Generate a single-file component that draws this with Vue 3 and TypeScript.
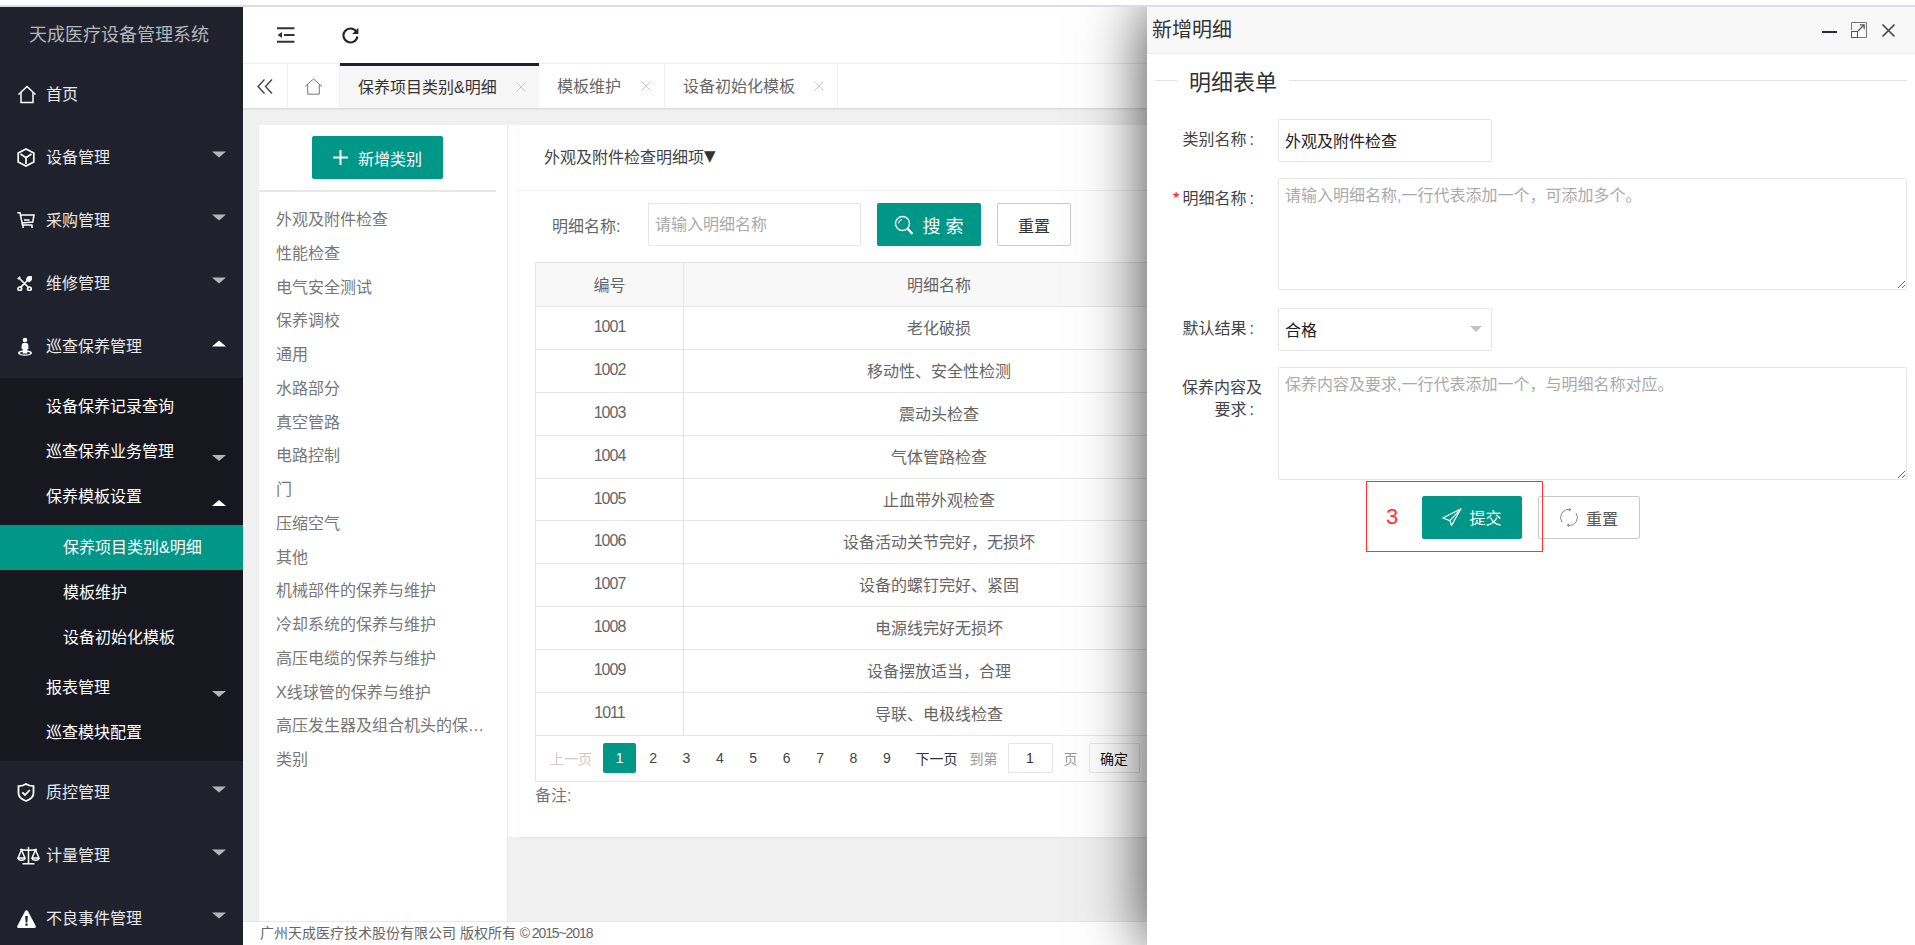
<script setup lang="ts">
interface Glyph { stroke?: string; fill?: string; solid?: string; w: number; h: number; vb: string; sw?: number }
interface SubItem { label: string; caret?: 'up' | 'down'; active?: boolean }

const glyphs: Record<string, Glyph> = {
  home: { w: 20, h: 19, vb: '0 0 20 19', stroke: 'M1.5 9.5 L10 1.5 L18.5 9.5 M4 7.5 V17.5 H16 V7.5' },
  cube: { w: 18, h: 19, vb: '0 0 18 19', sw: 1.7, stroke: 'M9 1 L16.8 5 V14 L9 18 L1.2 14 V5 Z M3.5 6 L9 9.8 L14.5 6 M9 9.8 V16' },
  cart: { w: 18, h: 17, vb: '0 0 18 17', stroke: 'M0.3 0.8 H3 L5.5 13 H15.5 M3.4 3 H17 L15.8 10 L5 11 M7 8 H12.5 M6 13 V16 M15 13 V16' },
  tools: { w: 15, h: 15, vb: '0 0 15 15', sw: 1.7, stroke: 'M2.5 2.5 L11.5 11.5 M11.5 3.5 L3.8 11.2 M0.8 3.2 L3.2 0.8 M9.8 4.2 A3.2 3.2 0 0 1 13.5 0.8 L11.8 2.8 L12.4 3.6 L14.2 2 A3.2 3.2 0 0 1 11.2 5.4 M1 12.8 A1.8 1.8 0 1 0 4.6 12.8 A1.8 1.8 0 1 0 1 12.8 Z M10.6 12.8 A1.8 1.8 0 1 0 14.2 12.8 A1.8 1.8 0 1 0 10.6 12.8 Z' },
  person: { w: 16, h: 19, vb: '0 0 16 19', fill: 'M1 16 A7 2.7 0 1 0 15 16 A7 2.7 0 1 0 1 16 Z M3 16 A5 1.6 0 1 0 13 16 A5 1.6 0 1 0 3 16 Z', solid: 'M8 0.8 A2.3 2.3 0 1 1 8 5.4 A2.3 2.3 0 1 1 8 0.8 Z M5.8 6 H10.2 L11.4 8 V12 H10.4 V16.6 H5.6 V12 H4.6 V8 Z' },
  shield: { w: 18, h: 19, vb: '0 0 18 19', sw: 1.8, stroke: 'M9 1 C11 2.4 13.5 3 16.5 3.2 V10 C16.5 14 13 16.6 9 18 C5 16.6 1.5 14 1.5 10 V3.2 C4.5 3 7 2.4 9 1 Z M5.3 9.3 L8 12 L12.8 7' },
  scale: { w: 23, h: 19, vb: '0 0 23 19', stroke: 'M11.5 1 V17.5 M5.5 17.8 H17.5 M3 3.6 C7 4.6 16 4.6 20 3.6 M4.5 4 L1 12 H8 Z M18.5 4 L15 12 H22 Z M1 12 C1.5 15 7.5 15 8 12 M15 12 C15.5 15 21.5 15 22 12' },
  warn: { w: 19, h: 18, vb: '0 0 19 18', fill: 'M9.5 0.3 C10.2 0.3 10.6 0.7 11 1.3 L18.6 15.8 C19.2 17 18.5 18 17.4 18 H1.6 C0.5 18 -0.2 17 0.4 15.8 L8 1.3 C8.4 0.7 8.8 0.3 9.5 0.3 Z M8.2 6 L8.6 12.4 H10.4 L10.8 6 Z M8.4 13.6 V15.8 H10.6 V13.6 Z' },
}

const topBefore = [
  { label: '首页', icon: 'home' },
  { label: '设备管理', icon: 'cube', caret: 'down' },
  { label: '采购管理', icon: 'cart', caret: 'down' },
  { label: '维修管理', icon: 'tools', caret: 'down' },
  { label: '巡查保养管理', icon: 'person', caret: 'up' },
]
const subTop: SubItem[] = [
  { label: '设备保养记录查询' },
  { label: '巡查保养业务管理', caret: 'down' },
  { label: '保养模板设置', caret: 'up' },
]
const subDeep: SubItem[] = [
  { label: '保养项目类别&明细', active: true },
  { label: '模板维护' },
  { label: '设备初始化模板' },
]
const subBottom: SubItem[] = [
  { label: '报表管理', caret: 'down' },
  { label: '巡查模块配置' },
]
const topAfter = [
  { label: '质控管理', icon: 'shield', caret: 'down' },
  { label: '计量管理', icon: 'scale', caret: 'down' },
  { label: '不良事件管理', icon: 'warn', caret: 'down' },
]
const tabs = [
  { label: '保养项目类别&明细', active: true, w: 199 },
  { label: '模板维护', w: 126 },
  { label: '设备初始化模板', w: 173 },
]
const categories = [
  '外观及附件检查', '性能检查', '电气安全测试', '保养调校', '通用', '水路部分', '真空管路', '电路控制', '门',
  '压缩空气', '其他', '机械部件的保养与维护', '冷却系统的保养与维护', '高压电缆的保养与维护', 'X线球管的保养与维护',
  '高压发生器及组合机头的保养与维护', '类别',
]
const rows: [string, string][] = [
  ['1001', '老化破损'],
  ['1002', '移动性、安全性检测'],
  ['1003', '震动头检查'],
  ['1004', '气体管路检查'],
  ['1005', '止血带外观检查'],
  ['1006', '设备活动关节完好，无损坏'],
  ['1007', '设备的螺钉完好、紧固'],
  ['1008', '电源线完好无损坏'],
  ['1009', '设备摆放适当，合理'],
  ['1011', '导联、电极线检查'],
]
const pages = [1, 2, 3, 4, 5, 6, 7, 8, 9]
</script>

<template>
  <div class="app">
    <div class="strip"></div>
    <div class="shell">
      <aside class="sidebar">
        <div class="logo">天成医疗设备管理系统</div>
        <div v-for="it in topBefore" :key="it.label" class="nav">
          <span class="nav-ico">
            <svg :width="glyphs[it.icon].w" :height="glyphs[it.icon].h" :viewBox="glyphs[it.icon].vb">
              <path v-if="glyphs[it.icon].stroke" :d="glyphs[it.icon].stroke" fill="none" stroke="#fff" :stroke-width="glyphs[it.icon].sw ?? 1.5" />
              <path v-if="glyphs[it.icon].fill" :d="glyphs[it.icon].fill" fill="#fff" fill-rule="evenodd" />
              <path v-if="glyphs[it.icon].solid" :d="glyphs[it.icon].solid" fill="#fff" />
            </svg>
          </span>
          <span class="nav-text">{{ it.label }}</span>
          <i v-if="it.caret" class="caret" :class="it.caret"></i>
        </div>
        <div class="subnav">
          <div v-for="s in subTop" :key="s.label" class="sub">
            <span class="nav-text">{{ s.label }}</span>
            <i v-if="s.caret" class="caret low" :class="s.caret"></i>
          </div>
          <div class="deep-group">
            <div v-for="s in subDeep" :key="s.label" class="sub deep" :class="{ active: s.active }">
              <span class="nav-text">{{ s.label }}</span>
            </div>
          </div>
          <div v-for="s in subBottom" :key="s.label" class="sub">
            <span class="nav-text">{{ s.label }}</span>
            <i v-if="s.caret" class="caret low" :class="s.caret"></i>
          </div>
        </div>
        <div v-for="it in topAfter" :key="it.label" class="nav">
          <span class="nav-ico">
            <svg :width="glyphs[it.icon].w" :height="glyphs[it.icon].h" :viewBox="glyphs[it.icon].vb">
              <path v-if="glyphs[it.icon].stroke" :d="glyphs[it.icon].stroke" fill="none" stroke="#fff" :stroke-width="glyphs[it.icon].sw ?? 1.5" />
              <path v-if="glyphs[it.icon].fill" :d="glyphs[it.icon].fill" fill="#fff" fill-rule="evenodd" />
            </svg>
          </span>
          <span class="nav-text">{{ it.label }}</span>
          <i class="caret" :class="it.caret"></i>
        </div>
      </aside>

      <main class="main">
        <header class="toolbar">
          <svg class="tool-a" width="18" height="16" viewBox="0 0 18 16">
            <path d="M0 1.2 H17.5 M7 8 H17.5 M0 14.8 H17.5" fill="none" stroke="#333" stroke-width="2" />
            <path d="M0.5 8 L5 5 V11 Z" fill="#333" />
          </svg>
          <svg class="tool-b" width="17" height="17" viewBox="0 0 17 17">
            <path d="M14.2 4.4 A7 7 0 1 0 15.4 9.5" fill="none" stroke="#222" stroke-width="2.1" />
            <path d="M16.4 0.8 V7 H10.2 Z" fill="#222" />
          </svg>
        </header>

        <nav class="tabbar">
          <div class="tab-btn back">
            <svg width="16" height="15" viewBox="0 0 16 15">
              <path d="M7.5 0.5 L1 7.5 L7.5 14.5 M15 0.5 L8.5 7.5 L15 14.5" fill="none" stroke="#444" stroke-width="1.4" />
            </svg>
          </div>
          <div class="tab-btn homeb">
            <svg width="19" height="17" viewBox="0 0 19 17">
              <path d="M1 8.5 L9.5 1 L18 8.5 M3.7 6.5 V16.2 H15.3 V6.5" fill="none" stroke="#777" stroke-width="1" />
            </svg>
          </div>
          <div v-for="t in tabs" :key="t.label" class="tab" :class="{ on: t.active }" :style="{ width: t.w + 'px' }">
            <span class="tab-text">{{ t.label }}</span>
            <svg class="tab-x" width="10" height="10" viewBox="0 0 10 10">
              <path d="M0.5 0.5 L9.5 9.5 M9.5 0.5 L0.5 9.5" stroke="#c8c8c8" stroke-width="1" fill="none" />
            </svg>
          </div>
        </nav>

        <section class="content">
          <div class="cat-panel">
            <div class="cat-head">
              <button class="btn-green add">
                <svg width="15" height="15" viewBox="0 0 15 15"><path d="M7.5 0 V15 M0 7.5 H15" stroke="#fff" stroke-width="2" fill="none" /></svg>
                新增类别
              </button>
            </div>
            <ul class="cat-list">
              <li v-for="c in categories" :key="c">{{ c }}</li>
            </ul>
          </div>

          <div class="detail">
            <div class="card">
              <div class="card-title"><span class="card-text">外观及附件检查明细项<span class="tri">▼</span></span></div>
              <div class="search">
                <span class="search-label">明细名称:</span>
                <input class="search-input" placeholder="请输入明细名称" />
                <button class="btn-green find">
                  <svg width="20" height="20" viewBox="0 0 20 20">
                    <circle cx="8.5" cy="8.5" r="7" fill="none" stroke="#fff" stroke-width="1.4" />
                    <path d="M13.5 13.5 L18.5 19" stroke="#fff" stroke-width="2.2" fill="none" />
                    <path d="M4.5 8.5 A4 4 0 0 1 8 4.5" stroke="#fff" stroke-width="1" fill="none" />
                  </svg>
                  搜 索
                </button>
                <button class="btn-plain">重置</button>
              </div>
              <div class="table-wrap">
                <table>
                  <thead>
                    <tr><th class="c1">编号</th><th>明细名称</th></tr>
                  </thead>
                  <tbody>
                    <tr v-for="r in rows" :key="r[0]">
                      <td class="c1 num">{{ r[0] }}</td>
                      <td>{{ r[1] }}</td>
                    </tr>
                  </tbody>
                </table>
                <div class="pager">
                  <span class="prev">上一页</span>
                  <span v-for="p in pages" :key="p" class="pg" :class="{ cur: p === 1 }">{{ p }}</span>
                  <span class="next">下一页</span>
                  <span class="goto">到第</span>
                  <span class="pg-input">1</span>
                  <span class="pg-unit">页</span>
                  <span class="pg-ok">确定</span>
                </div>
              </div>
              <div class="note">备注:</div>
            </div>
          </div>
        </section>

        <footer class="footer">广州天成医疗技术股份有限公司 版权所有 <span class="copy">© 2015~2018</span></footer>
      </main>

      <div class="modal">
        <div class="modal-head">
          <span class="modal-title">新增明细</span>
          <div class="modal-ctrl">
            <svg width="15" height="16" viewBox="0 0 15 16"><path d="M0 10 H15" stroke="#2a2a35" stroke-width="2" /></svg>
            <svg width="16" height="16" viewBox="0 0 16 16">
              <path d="M0.5 8 V0.5 H15.5 V15.5 H7" fill="none" stroke="#777" stroke-width="1" />
              <rect x="0.5" y="9.5" width="6" height="6" fill="none" stroke="#555" stroke-width="1" />
              <path d="M7 9 L13 3 M8.8 2.8 H13.2 V7.2" fill="none" stroke="#555" stroke-width="1.2" />
            </svg>
            <svg width="15" height="15" viewBox="0 0 15 15"><path d="M1.5 1.5 L13.5 13.5 M13.5 1.5 L1.5 13.5" stroke="#444" stroke-width="1.6" /></svg>
          </div>
        </div>

        <div class="legend">
          <span class="legend-a"></span>
          <span class="legend-t">明细表单</span>
          <span class="legend-b"></span>
        </div>

        <form class="form" @submit.prevent>
          <div class="row">
            <label class="lbl">类别名称</label>
            <input class="ctl short" value="外观及附件检查" />
          </div>
          <div class="row r2">
            <label class="lbl req">明细名称</label>
            <textarea class="ctl area a1" placeholder="请输入明细名称,一行代表添加一个，可添加多个。"></textarea>
          </div>
          <div class="row r3">
            <label class="lbl">默认结果</label>
            <div class="ctl short sel">
              <span>合格</span>
              <i class="sel-caret"></i>
            </div>
          </div>
          <div class="row r4">
            <label class="lbl">保养内容及要求</label>
            <textarea class="ctl area a2" placeholder="保养内容及要求,一行代表添加一个，与明细名称对应。"></textarea>
          </div>
          <div class="actions">
            <button class="btn-green submit">
              <svg width="20" height="18" viewBox="0 0 20 18">
                <path d="M19 0.8 L0.8 10 L7.8 12.6 L9.5 17.4 C12 13 16 6 19 0.8 Z M19 0.8 L7.8 12.6" fill="none" stroke="#fff" stroke-width="1.2" stroke-linejoin="round" />
              </svg>
              提交
            </button>
            <button class="btn-plain redo">
              <svg width="18" height="19" viewBox="0 0 18 19">
                <path d="M2 14 A8 8 0 0 1 9 1.5 M16 5 A8 8 0 0 1 9 17.5" fill="none" stroke="#888" stroke-width="1" />
                <path d="M9 0 L11.5 1.7 L9 3.4 Z M9 15.6 L6.5 17.3 L9 19 Z" fill="#888" />
              </svg>
              重置
            </button>
          </div>
        </form>

        <div class="callout"><span>3</span></div>
      </div>
    </div>
  </div>
</template>

<style>
html, body { margin: 0; padding: 0; background: #fff; }
</style>

<style scoped>
* { box-sizing: border-box; }
.app {
  width: 1915px;
  height: 945px;
  overflow: hidden;
  display: flex;
  flex-direction: column;
  font-family: "Liberation Sans", "Noto Sans CJK SC", sans-serif;
  font-size: 16px;
  color: #666;
  background: #fff;
}
.strip { height: 7px; flex: none; background: #fff; border-bottom: 2px solid #dcdce4; }
.shell { flex: 1; min-height: 0; display: flex; position: relative; overflow: hidden; }

.sidebar { width: 243px; flex: none; background: #1f222d; color: #e8e8e8; }
.logo { height: 56px; display: flex; align-items: center; justify-content: center; font-size: 18px; color: #b4b6bb; padding: 0 5px 4px 0; }
.nav { height: 63px; display: flex; align-items: center; padding: 0 17px; }
.nav-ico { width: 29px; flex: none; display: flex; align-items: center; }
.nav-text { padding-bottom: 3px; }
.caret { margin-left: auto; width: 0; height: 0; border-left: 7px solid transparent; border-right: 7px solid transparent; transform: translateY(-3.5px); }
.caret.down { border-top: 6px solid #b5b5b8; }
.caret.up { border-bottom: 6px solid #fff; }
.caret.low.down { transform: translateY(6px); }
.caret.low.up { transform: translateY(6px); }
.subnav { background: #17181f; padding: 6px 0; color: #fff; }
.deep-group { padding: 6px 0 5px; }
.sub { height: 45px; display: flex; align-items: center; padding: 0 17px 0 46px; }
.sub.deep { padding-left: 63px; }
.sub.active { background: #009688; }

.main { flex: 1; min-width: 0; display: flex; flex-direction: column; }
.toolbar { height: 56px; flex: none; display: flex; align-items: center; padding-left: 34px; background: #fff; }
.tool-a { margin-right: 47px; }
.tabbar { height: 45px; flex: none; display: flex; background: #fff; border-top: 1px solid #f0f0f0; box-shadow: 0 1px 2px rgba(0, 0, 0, .12); position: relative; }
.tab-btn { display: flex; align-items: center; justify-content: center; border-right: 1px solid #f0f0f0; }
.tab-btn.back { width: 45px; padding-right: 1px; }
.tab-btn.homeb { width: 52px; }
.tab { display: flex; align-items: center; justify-content: space-between; padding: 0 13px 0 18px; border-right: 1px solid #f0f0f0; color: #666; }
.tab-text { padding-bottom: 2px; }
.tab.on { background: #f6f6f6; color: #333; border-top: 3px solid #1f222d; margin-top: -1px; height: 45px; border-right: none; }
.content { flex: 1; min-height: 0; display: flex; align-items: flex-start; background: #f0f0f0; padding: 17px 0 0 16px; overflow: hidden; }

.cat-panel { width: 249px; flex: none; align-self: stretch; background: #fff; border-right: 1px solid #eaeaea; }
.cat-head { width: 237px; height: 67px; border-bottom: 2px solid #e8e8e8; display: flex; justify-content: center; padding-top: 11px; }
.btn-green { border: none; background: #009688; color: #fff; font: inherit; border-radius: 2px; display: flex; align-items: center; justify-content: center; padding: 0; }
.add { width: 131px; height: 43px; gap: 10px; }
.cat-list { list-style: none; margin: 0; padding: 11px 17px 0; }
.cat-list li { height: 33.75px; line-height: 33.75px; width: 214px; overflow: hidden; white-space: nowrap; text-overflow: ellipsis; color: #777; }

.detail { width: 900px; flex: none; height: 712px; background: #fff; padding-left: 10px; }
.card { height: 100%; border-left: 1px solid #f8f8f8; box-shadow: 0 2px 2px -1px rgba(0, 0, 0, .06); }
.card-title { height: 66px; border-bottom: 1px solid #f0f0f0; display: flex; align-items: center; padding-left: 25px; color: #444; }
.card-text { padding-bottom: 3px; display: flex; align-items: center; }
.tri { font-family: "DejaVu Sans", sans-serif; font-size: 15px; color: #333; }
.search { display: flex; align-items: center; margin-top: 12px; padding-left: 33px; height: 43px; }
.search-label { width: 96px; color: #666; }
.search-input { width: 213px; height: 43px; border: 1px solid #e6e6e6; border-radius: 2px; padding: 0 6px; font: inherit; outline: none; }
.search-input::placeholder { color: #aaa; }
.find { width: 104px; height: 43px; margin-left: 16px; gap: 8px; font-size: 18px; }
.btn-plain { background: #fff; border: 1px solid #c9c9c9; border-radius: 2px; font: inherit; color: #333; padding: 0; }
.search .btn-plain { width: 74px; height: 43px; margin-left: 16px; }
.table-wrap { margin: 16px 0 0 16px; width: 660px; }
table { width: 100%; border-collapse: collapse; table-layout: fixed; border: 1px solid #e6e6e6; }
th, td { border: 1px solid #e6e6e6; text-align: center; font-weight: 400; color: #666; padding: 0 0 2px; }
th { height: 44px; background: #f8f8f8; }
td { height: 42.9px; }
.c1 { width: 148px; }
.num { letter-spacing: -1px; }
.pager { height: 46px; display: flex; align-items: center; font-size: 14px; color: #444; border: 1px solid #e6e6e6; border-top: none; padding-left: 14px; white-space: nowrap; }
.pager span { flex: none; }
.prev { width: 42px; color: #ccc; margin-right: 11px; }
.pg { width: 33.4px; height: 30px; display: flex; align-items: center; justify-content: center; border-radius: 2px; }
.pg.cur { background: #009688; color: #fff; }
.next { margin-left: 12px; width: 42px; color: #333; }
.goto { margin-left: 12px; width: 28px; color: #999; }
.pg-input { margin-left: 10px; width: 45px; height: 30px; border: 1px solid #e6e6e6; border-radius: 2px; display: flex; align-items: center; justify-content: center; color: #333; }
.pg-unit { margin-left: 11px; width: 14px; color: #999; }
.pg-ok { margin-left: 11px; width: 51px; height: 30px; border: 1px solid #e6e6e6; border-radius: 2px; display: flex; align-items: center; justify-content: center; color: #111; }
.note { margin: 2px 0 0 16px; line-height: 24px; color: #777; }

.footer { height: 24px; flex: none; background: #fff; border-top: 1px solid #e8e8e8; font-size: 14px; line-height: 23px; padding-left: 17px; color: #666; }
.copy { letter-spacing: -1.1px; }

.modal { position: absolute; left: 1147px; top: 0; right: 0; bottom: 0; background: #fff; box-shadow: 0 0 60px rgba(0, 0, 0, .75); z-index: 5; }
.modal-head { height: 47px; background: #f8f8f8; border-bottom: 1px solid #eee; display: flex; align-items: center; justify-content: space-between; padding: 0 19px 0 5px; }
.modal-title { font-size: 20px; color: #333; padding-bottom: 3px; }
.modal-ctrl { display: flex; align-items: center; gap: 14px; }
.legend { height: 54px; display: flex; align-items: center; padding: 0 8px 1px; }
.legend-a { width: 22px; height: 1px; background: #e2e2e2; }
.legend-t { font-size: 22px; color: #333; padding: 0 12px 2px; }
.legend-b { flex: 1; height: 1px; background: #e2e2e2; }
.form { padding: 11px 8px 0 31px; }
.row { display: flex; gap: 16px; align-items: flex-start; }
.r2 { margin-top: 16px; }
.r3 { margin-top: 18px; }
.r4 { margin-top: 16px; }
.lbl { width: 84px; flex: none; text-align: right; line-height: 22px; padding-top: 10px; color: #444; position: relative; }
.lbl::after { content: ":"; margin-right: 8px; margin-left: 3px; }
.req::before { content: "*"; position: absolute; left: -5px; top: 10px; color: #f00; font-size: 16px; }
.ctl { border: 1px solid #e6e6e6; border-radius: 2px; font: inherit; color: #222; background: #fff; outline: none; }
.short { width: 214px; height: 43px; padding: 0 6px 2px; display: flex; align-items: center; }
.area { width: 629px; padding: 5px 6px; line-height: 24px; display: block; }
.area::placeholder { color: #aaa; }
.a1 { height: 112px; }
.a2 { height: 113px; }
.sel { justify-content: space-between; }
.sel-caret { width: 0; height: 0; border-left: 6.5px solid transparent; border-right: 6.5px solid transparent; border-top: 6px solid #c2c2c2; margin-right: 3px; }
.actions { display: flex; gap: 16px; margin: 16px 0 0 244px; }
.submit { width: 100px; height: 43px; gap: 7px; padding-bottom: 1px; }
.redo { width: 102px; height: 43px; color: #555; display: flex; align-items: center; justify-content: center; gap: 8px; }
.callout { position: absolute; left: 219px; top: 474px; width: 177px; height: 71px; border: 1px solid #f33; color: #f33; font-size: 22px; display: flex; align-items: center; padding-left: 19px; pointer-events: none; }
</style>
